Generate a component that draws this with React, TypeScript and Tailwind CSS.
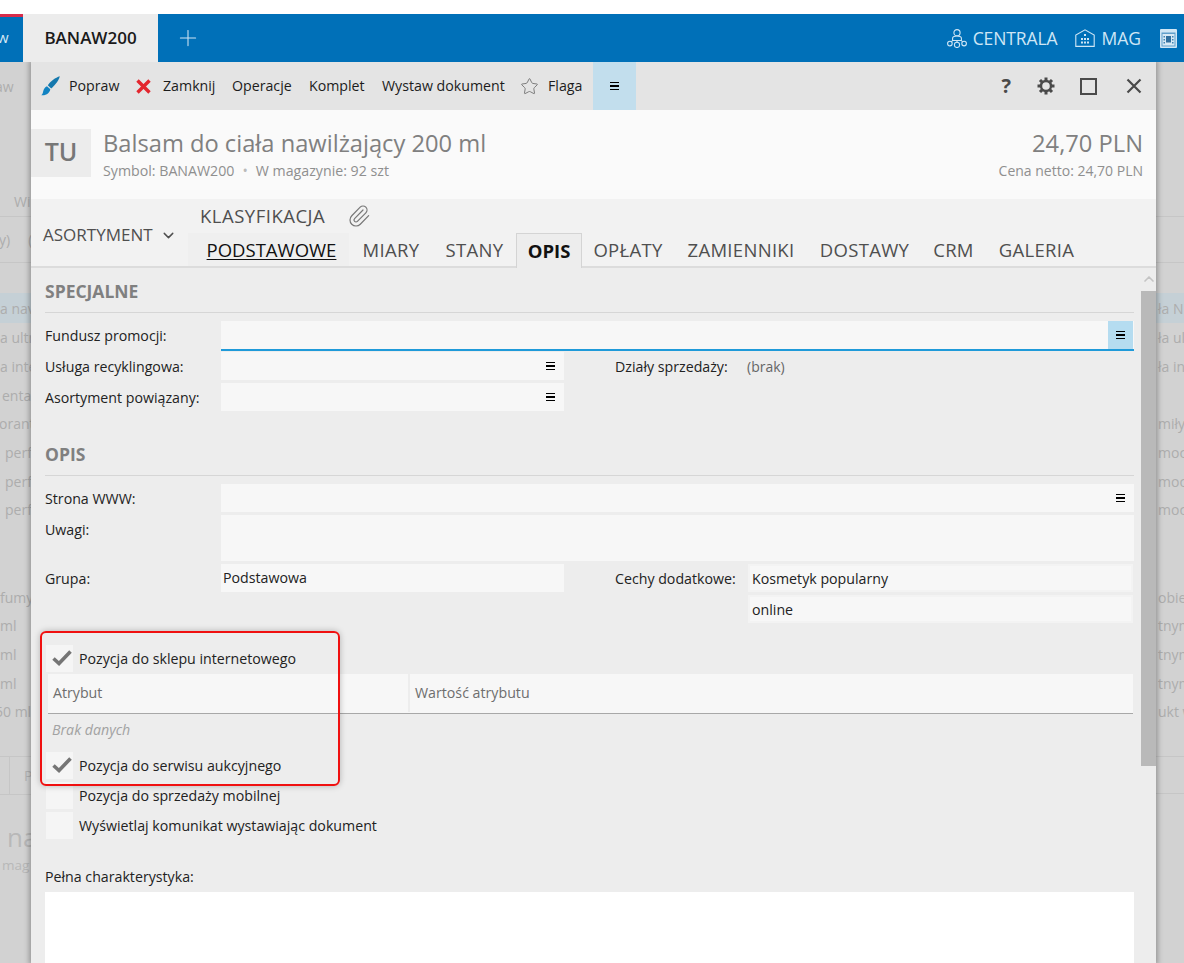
import React from 'react';
import { ChevronDown, ChevronUp, Paperclip, Plus, Star } from 'lucide-react';

const font = "font-['Open_Sans','Noto_Sans',sans-serif]";

const leftRows = [
  { text: 'aw', cls: 'h-[48px] mb-[76px] ml-[-5px]' },
  { text: 'Wi', cls: 'h-[31px] border-b border-[#c6c6c6] pl-[14px]' },
  { text: 'y)\u00a0\u00a0\u00a0\u00a0\u00a0(', cls: 'h-[46px] border-b border-[#c6c6c6] mb-[30px] ml-[-1px]' },
  { text: 'a nav', cls: 'h-[30px] bg-[#c5d0d6]' },
  { text: 'a ultr', cls: 'h-[29px]' },
  { text: 'a inte', cls: 'h-[29px]' },
  { text: 'enta', cls: 'h-[28px] pl-[2px]' },
  { text: 'orant', cls: 'h-[29px] ml-[-1px]' },
  { text: 'perf', cls: 'h-[29px] pl-[5px]' },
  { text: 'perf', cls: 'h-[28px] pl-[5px]' },
  { text: 'perf', cls: 'h-[29px] mb-[59px] pl-[5px]' },
  { text: 'fumy', cls: 'h-[28px]' },
  { text: 'ml', cls: 'h-[29px]' },
  { text: 'ml', cls: 'h-[29px]' },
  { text: 'ml', cls: 'h-[29px]' },
  { text: '50 ml', cls: 'h-[27px] mb-[31px] ml-[-5px]' },
];

const rightRows = [
  { text: '', cls: 'h-[124px]' },
  { text: '', cls: 'h-[31px] border-b border-[#c6c6c6]' },
  { text: '', cls: 'h-[46px] border-b border-[#c6c6c6] mb-[30px]' },
  { text: 'ła N', cls: 'h-[30px] bg-[#c5d0d6]' },
  { text: 'ła ult', cls: 'h-[29px]' },
  { text: 'ła int', cls: 'h-[29px]' },
  { text: '', cls: 'h-[28px]' },
  { text: 'miły', cls: 'h-[29px]' },
  { text: 'moc', cls: 'h-[29px]' },
  { text: 'moc', cls: 'h-[28px]' },
  { text: 'moc', cls: 'h-[29px] mb-[59px]' },
  { text: 'obiet', cls: 'h-[28px]' },
  { text: 'tnym', cls: 'h-[29px]' },
  { text: 'tnym', cls: 'h-[29px]' },
  { text: 'tnym', cls: 'h-[29px]' },
  { text: 'ukt w', cls: 'h-[27px] mb-[31px]' },
  { text: '', cls: 'h-[38px] border-y border-[#c6c6c6]' },
];

const MenuLines = () => (
  <span className="flex w-[9px] flex-col gap-[2px]">
    <span className="h-[1.5px] bg-black" />
    <span className="h-[1.5px] bg-black" />
    <span className="h-[1.5px] bg-black" />
  </span>
);

const CheckMark = () => (
  <svg width="20" height="16" viewBox="0 0 20 16" fill="none">
    <path d="M1.5 8.5 L7 13.5 L18.5 1.5" stroke="#757575" strokeWidth="3.6" />
  </svg>
);

const Gear = () => (
  <svg className="ml-[25px]" width="20" height="20" viewBox="0 0 20 20" fill="none" stroke="#4a4a4a">
    <circle cx="10" cy="10" r="5" strokeWidth="2.4" />
    <path
      d="M10 1.5V4.5M10 15.5V18.5M1.5 10H4.5M15.5 10H18.5M4 4L6.1 6.1M13.9 13.9L16 16M16 4L13.9 6.1M6.1 13.9L4 16"
      strokeWidth="3"
    />
  </svg>
);

const CheckRow = ({ label, checked, cls }: { label: string; checked?: boolean; cls: string }) => (
  <div className={`flex items-center ${cls}`}>
    <span className="ml-px flex h-[27px] w-[27px] items-center justify-center bg-[#f5f5f5]">
      {checked && <span className="ml-[4px] mt-[-2px]"><CheckMark /></span>}
    </span>
    <span className="ml-[6px] text-[14.2px] text-[#222]">{label}</span>
  </div>
);

const Field = ({ children, cls }: { children?: React.ReactNode; cls: string }) => (
  <div className={`flex h-[28px] items-center bg-[#f7f7f7] ${cls}`}>{children}</div>
);

const Label = ({ children, cls = 'w-[176px] pt-[2px]' }: { children: React.ReactNode; cls?: string }) => (
  <span className={`shrink-0 text-[14.2px] text-[#222] ${cls}`}>{children}</span>
);

const tabsBefore = [
  { name: 'MIARY', w: 'w-[84px]' },
  { name: 'STANY', w: 'w-[83px]' },
];
const tabsAfter = [
  { name: 'OPŁATY', w: 'w-[92px]' },
  { name: 'ZAMIENNIKI', w: 'w-[134px]' },
  { name: 'DOSTAWY', w: 'w-[113px]' },
  { name: 'CRM', w: 'w-[65px]' },
  { name: 'GALERIA', w: 'w-[101px]' },
];

export default function App() {
  return (
    <div className={`flex h-[963px] w-[1184px] flex-col overflow-hidden bg-white ${font}`}>
      <div className="h-[14px] shrink-0" />

      {/* top bar */}
      <div className="relative z-10 flex h-[48px] shrink-0 items-center bg-[#0070b8]">
        <div className="h-full w-[23px] overflow-hidden border-t-[3px] border-[#d82c4a]">
          <span className="ml-[-3px] mt-[9px] block text-[15px] text-[#d5e8f5]">w</span>
        </div>
        <div className="flex h-full w-[135px] items-center justify-center bg-[#ececec] text-[17px] font-semibold text-[#1a1a1a]">
          BANAW200
        </div>
        <Plus className="ml-[17px] h-[26px] w-[26px] text-[#cfe4f3]" strokeWidth={1} />

        <div className="ml-auto flex items-center text-[17.5px] text-[#cfe6f5]">
          <svg width="20" height="19" viewBox="0 0 20 19" fill="none" stroke="#cfe6f5" strokeWidth="1.1">
            <circle cx="10" cy="3.7" r="3.1" />
            <path d="M5.6 11.5 V9.2 C5.6 7.8 7.5 7 10 7 C12.5 7 14.4 7.8 14.4 9.2 V11.5 H5.6 M10 11.5 V13.6 M5.6 11.5 L4.4 12.8 M14.4 11.5 L15.6 12.8" />
            <circle cx="2.9" cy="14.6" r="2.3" />
            <circle cx="17.1" cy="14.6" r="2.3" />
            <circle cx="10" cy="15.9" r="2.6" />
          </svg>
          <span className="ml-[6px] tracking-[-0.1px]">CENTRALA</span>
          <svg className="ml-[18px]" width="20" height="18" viewBox="0 0 20 18" fill="none" stroke="#cfe6f5" strokeWidth="1.1">
            <path d="M0.8 17.4 V6 L10 0.8 L19.2 6 V17.4 Z" />
            <path d="M9 5h2v2h-2zM6 9h2v2H6zM9 9h2v2H9zM12 9h2v2h-2zM6 12.5h2v2H6zM9 12.5h2v2H9zM12 12.5h2v2h-2z" fill="#cfe6f5" stroke="none" />
          </svg>
          <span className="ml-[6px]">MAG</span>
          <svg className="ml-[19px] mr-[7px]" width="17" height="19" viewBox="0 0 17 19">
            <rect width="17" height="19" rx="1" fill="#cfe6f5" />
            <path d="M1.5 3.5h14v14h-14z" fill="#5f9fcb" />
            <path d="M2.5 5h12v11.5h-12z" fill="#d7e9f5" />
            <path d="M3.5 7h1.5v1.5H3.5zM3.5 10h1.5v1.5H3.5zM3.5 13h1.5v1.5H3.5zM12 7h1.5v1.5H12zM12 10h1.5v1.5H12zM12 13h1.5v1.5H12z" fill="#3f83b3" />
            <path d="M6 7h5v6.5H6z" fill="#2f6f9f" />
          </svg>
        </div>
      </div>

      <div className="flex min-h-0 flex-1">
        {/* dimmed page on the left */}
        <div className="flex w-[31px] shrink-0 flex-col overflow-hidden bg-[#d2d2d2] text-[14px] text-[#adadad]">
          {leftRows.map((r, i) => (
            <div key={i} className={`flex shrink-0 items-center whitespace-nowrap ${r.cls}`}>{r.text}</div>
          ))}
          <div className="flex h-[39px] shrink-0 border-y border-[#c6c6c6] pl-[9px]">
            <div className="flex flex-1 items-center border-l border-[#c6c6c6] pl-[14px] text-[#b4b4b4]">P</div>
          </div>
          <div className="mt-[26px] pl-[7px] text-[26px] leading-[32px] text-[#b8b8b8]">na</div>
          <div className="pl-[2px] text-[13.5px] leading-[24px] text-[#b8b8b8]">mag</div>
        </div>

        {/* product window */}
        <div className="relative flex w-[1125px] shrink-0 flex-col bg-[#ededed] shadow-[0_0_5px_2px_rgba(0,0,0,0.28)]">
          {/* toolbar */}
          <div className="flex h-[48px] shrink-0 items-center bg-[#e4e4e4] text-[14.2px] text-[#1c1c1c]">
            <svg className="ml-[10px]" width="19" height="20" viewBox="0 0 19 20">
              <path d="M18.8 0.3 C14.5 1.5 9.5 5.5 6.8 9.2 L10.2 12.4 C14 9.4 17.8 4.6 18.8 0.3 Z" fill="#1478ad" />
              <path d="M6 10.2 L9.3 13.2 C8.8 16.5 5.5 19.8 0.3 19.2 C2.3 17.8 1.8 15.5 2.8 13.5 C3.5 12 4.6 10.8 6 10.2 Z" fill="#1283c2" />
            </svg>
            <span className="ml-[9px] w-[50px]">Popraw</span>
            <svg className="ml-[17px]" width="15" height="15" viewBox="0 0 15 15">
              <path d="M1.5 1.5 L13.5 13.5 M13.5 1.5 L1.5 13.5" stroke="#e3262e" strokeWidth="3.4" />
            </svg>
            <span className="ml-[12px] w-[53px]">Zamknij</span>
            <span className="ml-[16px] w-[60px]">Operacje</span>
            <span className="ml-[17px] w-[56px]">Komplet</span>
            <span className="ml-[17px] w-[122px] whitespace-nowrap">Wystaw dokument</span>
            <Star className="ml-[16px] h-[19px] w-[19px] text-[#777]" strokeWidth={1.2} />
            <span className="ml-[9px] w-[36px]">Flaga</span>
            <div className="ml-[9px] flex h-full w-[43px] items-center justify-center bg-[#c2deed]">
              <MenuLines />
            </div>
            <div className="ml-auto flex items-center text-[#4a4a4a]">
              <span className="text-[20px] font-bold leading-none">?</span>
              <Gear />
              <span className="ml-[24px] h-[17px] w-[17px] border-2 border-[#4a4a4a]" />
              <svg className="ml-[29px] mr-[14px]" width="16" height="16" viewBox="0 0 16 16">
                <path d="M1.5 1.5 L14.5 14.5 M14.5 1.5 L1.5 14.5" stroke="#4a4a4a" strokeWidth="2.2" />
              </svg>
            </div>
          </div>

          {/* product header */}
          <div className="flex h-[89px] shrink-0 items-start bg-[#fafafa] pt-[19px]">
            <div className="flex h-[48px] w-[60px] items-center justify-center bg-[#ececec] pb-[2px] text-[25px] font-semibold text-[#777]">TU</div>
            <div className="ml-[12px]">
              <div className="mt-[-1px] text-[23.7px] leading-[30px] text-[#808080]">Balsam do ciała nawilżający 200 ml</div>
              <div className="mt-[3px] text-[14.2px] leading-[20px] text-[#8f8f8f]">
                Symbol: BANAW200<span className="mx-[8px] text-[#bbb]">•</span>W magazynie: 92 szt
              </div>
            </div>
            <div className="ml-auto mr-[13px] text-right">
              <div className="mt-[-1px] text-[23.7px] leading-[30px] text-[#808080]">24,70 PLN</div>
              <div className="mt-[3px] text-[14px] leading-[20px] text-[#8f8f8f]">Cena netto: 24,70 PLN</div>
            </div>
          </div>

          {/* tabs */}
          <div className="flex h-[69px] shrink-0 border-b-2 border-[#dcdcdc] bg-[#f2f2f2]">
            <div className="flex w-[157px] shrink-0 items-center pl-[12px] pt-[5px] text-[17px] text-[#4f4f4f]">
              ASORTYMENT
              <ChevronDown className="ml-[7px] h-[17px] w-[17px]" strokeWidth={2} />
            </div>
            <div className="flex flex-col">
              <div className="flex h-[34px] items-center pl-[12px] pt-px text-[18.5px] tracking-[0.5px] text-[#4f4f4f]">
                KLASYFIKACJA
                <Paperclip className="ml-[22px] h-[24px] w-[24px] rotate-[5px] text-[#777]" strokeWidth={1.2} />
              </div>
              <div className="flex h-[35px] items-stretch pt-px text-[18.5px] text-[#4f4f4f]">
                <div className="flex w-[161px] items-center justify-center bg-[#efefef] pl-[6px] text-[#111] underline underline-offset-2">PODSTAWOWE</div>
                {tabsBefore.map((t) => (
                  <div key={t.name} className={`flex items-center justify-center tracking-[0.3px] ${t.w}`}>{t.name}</div>
                ))}
                <div className="z-10 mb-[-2px] flex w-[66px] items-center justify-center border-x border-t border-[#d4d4d4] bg-[#ededed] font-bold text-[#111]">OPIS</div>
                {tabsAfter.map((t) => (
                  <div key={t.name} className={`flex items-center justify-center tracking-[0.3px] ${t.w}`}>{t.name}</div>
                ))}
              </div>
            </div>
          </div>

          {/* form + scrollbar */}
          <div className="flex min-h-0 flex-1">
            <div className="w-[1110px] shrink-0 pl-[14px] pr-[7px]">
              <div className="mt-[12px] text-[17.5px] font-bold leading-[22px] text-[#808080]">SPECJALNE</div>
              <div className="mt-[10px] h-px bg-[#d6d6d6]" />

              <div className="mt-[8px] flex">
                <Label cls="w-[176px] pt-[4px]">Fundusz promocji:</Label>
                <div className="flex h-[30px] flex-1 justify-end border-b-2 border-[#1f9ad9] bg-[#f7f7f7] pr-px">
                  <span className="flex w-[25px] items-center justify-center bg-[#b5dcf0]"><MenuLines /></span>
                </div>
              </div>

              <div className="mt-[1px] flex items-center">
                <Label>Usługa recyklingowa:</Label>
                <Field cls="w-[343px] justify-end pr-[9px]"><MenuLines /></Field>
                <Label cls="ml-[51px] w-[132px] pt-[2px]">Działy sprzedaży:</Label>
                <span className="text-[14px] text-[#666]">(brak)</span>
              </div>
              <div className="mt-[3px] flex items-center">
                <Label>Asortyment powiązany:</Label>
                <Field cls="w-[343px] justify-end pr-[9px]"><MenuLines /></Field>
              </div>

              <div className="mt-[32px] text-[17.5px] font-bold leading-[22px] text-[#808080]">OPIS</div>
              <div className="mt-[10px] h-px bg-[#d6d6d6]" />

              <div className="mt-[8px] flex items-center">
                <Label>Strona WWW:</Label>
                <Field cls="flex-1 justify-end pr-[9px]"><MenuLines /></Field>
              </div>
              <div className="mt-[3px] flex">
                <Label cls="w-[176px] pt-[4px]">Uwagi:</Label>
                <div className="h-[46px] flex-1 bg-[#f7f7f7]" />
              </div>

              <div className="mt-[3px] flex items-start">
                <Label cls="w-[176px] pt-[4px]">Grupa:</Label>
                <Field cls="w-[343px] pl-[2px] text-[14.2px] text-[#222]">Podstawowa</Field>
                <Label cls="ml-[51px] w-[133px] pt-[4px]">Cechy dodatkowe:</Label>
                <div className="flex-1 pr-px">
                  <Field cls="border-2 border-[#f3f3f3] pl-[2px] pt-[2px] text-[14.2px] text-[#222]">Kosmetyk popularny</Field>
                  <Field cls="mt-[3px] border-2 border-[#f3f3f3] pl-[2px] pt-[2px] text-[14.2px] text-[#222]">online</Field>
                </div>
              </div>

              <CheckRow label="Pozycja do sklepu internetowego" checked cls="mt-[22px]" />
              <div className="ml-[3px] mr-px mt-[2px] flex h-[40px] items-stretch border-b border-[#a8a8a8] bg-[#f7f7f7] pb-px text-[14.2px] text-[#6e6e6e]">
                <div className="flex w-[362px] items-center border-r-2 border-[#ededed] pl-[5px]">Atrybut</div>
                <div className="flex flex-1 items-center pl-[5px]">Wartość atrybutu</div>
              </div>
              <div className="ml-[7px] mt-[6px] text-[14.2px] italic leading-[20px] text-[#a2a2a2]">Brak danych</div>
              <CheckRow label="Pozycja do serwisu aukcyjnego" checked cls="mt-[12px]" />
              <CheckRow label="Pozycja do sprzedaży mobilnej" cls="mt-[3px]" />
              <CheckRow label="Wyświetlaj komunikat wystawiając dokument" cls="mt-[3px]" />

              <div className="mt-[28px] text-[14.2px] leading-[20px] text-[#222]">Pełna charakterystyka:</div>
              <div className="mt-[5px] h-[120px] bg-white" />
            </div>

            <div className="flex w-[15px] shrink-0 flex-col items-center">
              <ChevronUp className="mt-[3px] h-[16px] w-[16px] text-[#c4c4c4]" strokeWidth={2.5} />
              <div className="mt-[4px] h-[475px] w-full bg-[#b9b9b9]" />
            </div>
          </div>

          {/* red annotation drawn over the form */}
          <div className="pointer-events-none absolute left-[9px] top-[569px] h-[155px] w-[300px] rounded-[6px] border-2 border-[#f01010] shadow-[0_0_6px_rgba(0,0,0,0.25)]" />
        </div>

        {/* dimmed page on the right */}
        <div className="flex w-[28px] shrink-0 flex-col overflow-hidden bg-[#d2d2d2] text-[14px] text-[#adadad]">
          {rightRows.map((r, i) => (
            <div key={i} className={`flex shrink-0 items-center whitespace-nowrap pl-[2px] ${r.cls}`}>{r.text}</div>
          ))}
        </div>
      </div>
    </div>
  );
}
